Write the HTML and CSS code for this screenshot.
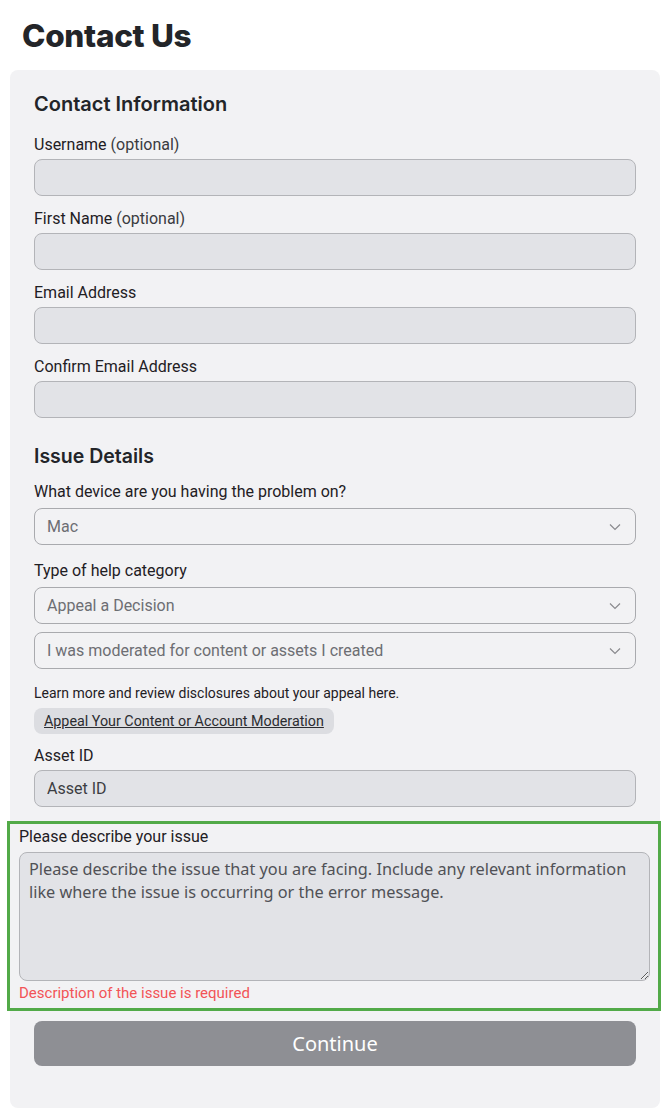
FILE: index.html
```html
<!DOCTYPE html>
<html lang="en">
<head>
  <meta charset="UTF-8">
  <title>Contact Us</title>
  <link rel="stylesheet" href="styles.css">
</head>
<body>
  <h1 class="page-title">Contact Us</h1>

  <form class="contact-card">
    <h2 class="section-title">Contact Information</h2>

    <div class="form-group">
      <label for="username">Username <span class="opt">(optional)</span></label>
      <input type="text" id="username" class="field" disabled>
    </div>

    <div class="form-group">
      <label for="firstName">First Name <span class="opt">(optional)</span></label>
      <input type="text" id="firstName" class="field" disabled>
    </div>

    <div class="form-group">
      <label for="email">Email Address</label>
      <input type="text" id="email" class="field" disabled>
    </div>

    <div class="form-group">
      <label for="confirmEmail">Confirm Email Address</label>
      <input type="text" id="confirmEmail" class="field" disabled>
    </div>

    <h2 class="section-title issue">Issue Details</h2>

    <div class="form-group select-group">
      <label for="device">What device are you having the problem on?</label>
      <div class="select">
        <span>Mac</span>
        <svg width="12" height="8" viewBox="0 0 12 8"><path d="M1 1.5l5 5 5-5" fill="none" stroke="#8a8a8e" stroke-width="1.2"/></svg>
      </div>
    </div>

    <div class="form-group select-group">
      <label>Type of help category</label>
      <div class="select">
        <span>Appeal a Decision</span>
        <svg width="12" height="8" viewBox="0 0 12 8"><path d="M1 1.5l5 5 5-5" fill="none" stroke="#8a8a8e" stroke-width="1.2"/></svg>
      </div>
      <div class="select second">
        <span>I was moderated for content or assets I created</span>
        <svg width="12" height="8" viewBox="0 0 12 8"><path d="M1 1.5l5 5 5-5" fill="none" stroke="#8a8a8e" stroke-width="1.2"/></svg>
      </div>
    </div>

    <div class="disclosure">
      <p>Learn more and review disclosures about your appeal here.</p>
      <a href="#" class="pill-link">Appeal Your Content or Account Moderation</a>
    </div>

    <div class="form-group">
      <label for="assetId">Asset ID</label>
      <input type="text" id="assetId" class="field" placeholder="Asset ID">
    </div>

    <div class="form-group highlight">
      <label for="issue">Please describe your issue</label>
      <textarea id="issue" placeholder="Please describe the issue that you are facing. Include any relevant information like where the issue is occurring or the error message."></textarea>
      <div class="error">Description of the issue is required</div>
    </div>

    <button type="button" class="continue-btn">Continue</button>
  </form>
</body>
</html>
```

FILE: styles.css
```css
body {
    margin: 0;
    padding: 0 10px 4px 10px;
    background: #fff;
    font-family: Roboto, Arial, sans-serif;
    color: #1f2024;
}

.page-title {
    margin: 0;
    padding: 16px 0 15px 12px;
    font-family: Inter, Arial, sans-serif;
    font-size: 31.5px;
    font-weight: 800;
    color: #232529;
    letter-spacing: -0.3px;
    line-height: 39px;
}

.contact-card {
    background: #f2f2f4;
    border-radius: 8px;
    padding: 22px 24px 42px 24px;
    display: flex;
    flex-direction: column;
}

.section-title {
    margin: 0 0 19px 0;
    font-family: Inter, Arial, sans-serif;
    font-size: 20px;
    font-weight: 600;
    line-height: 24px;
    color: #232529;
}

.section-title.issue {
    margin-top: 13px;
    margin-bottom: 14px;
    font-size: 19.5px;
}

.form-group {
    display: flex;
    flex-direction: column;
    margin-bottom: 13px;
}

label {
    font-size: 16px;
    line-height: 20px;
    color: #1f2024;
    margin-bottom: 4px;
}

label .opt {
    color: #3a3b40;
}

.field {
    box-sizing: border-box;
    height: 37px;
    width: 100%;
    padding: 0 12px;
    background: #e2e3e7;
    border: 1px solid #b3b4b8;
    border-radius: 8px;
    font-family: Roboto, Arial, sans-serif;
    font-size: 16px;
    color: #1f2024;
}

.field::placeholder {
    color: #3c3d42;
}

.select-group {
    margin-bottom: 16px;
}

.select-group label {
    margin-bottom: 6px;
}

.select {
    box-sizing: border-box;
    height: 37px;
    display: flex;
    align-items: center;
    justify-content: space-between;
    padding: 0 14px 0 12px;
    border: 1px solid #a9aaae;
    border-radius: 8px;
    font-size: 16px;
    color: #6d6e73;
}

.select.second {
    margin-top: 8px;
}

.disclosure {
    margin-bottom: 12px;
}

.disclosure p {
    margin: 0 0 6px 0;
    font-size: 14px;
    line-height: 17px;
    color: #1f2024;
}

.pill-link {
    display: inline-block;
    padding: 4px 10px;
    background: #dcdde1;
    border-radius: 8px;
    font-size: 14.3px;
    line-height: 18px;
    color: #2b2c30;
}

.highlight {
    margin: 1px -25px 10px -27px;
    padding: 3px 8px 6px 9px;
    border: 3px solid #52aa48;
}

.highlight label {
    margin-bottom: 5px;
}

textarea {
    box-sizing: border-box;
    height: 129px;
    width: 100%;
    padding: 5px 9px;
    background: #e2e3e7;
    border: 1px solid #b3b4b8;
    border-radius: 8px;
    font-family: "Noto Sans", Arial, sans-serif;
    font-size: 16.3px;
    line-height: 23px;
    resize: vertical;
}

textarea::placeholder {
    color: #505156;
}

.error {
    margin-top: 3px;
    font-size: 15px;
    line-height: 18px;
    color: #f25457;
}

.continue-btn {
    height: 45px;
    width: 100%;
    background: #8e8f94;
    color: #fff;
    border: none;
    border-radius: 8px;
    font-family: "Noto Sans", Arial, sans-serif;
    font-size: 20px;
}
```
